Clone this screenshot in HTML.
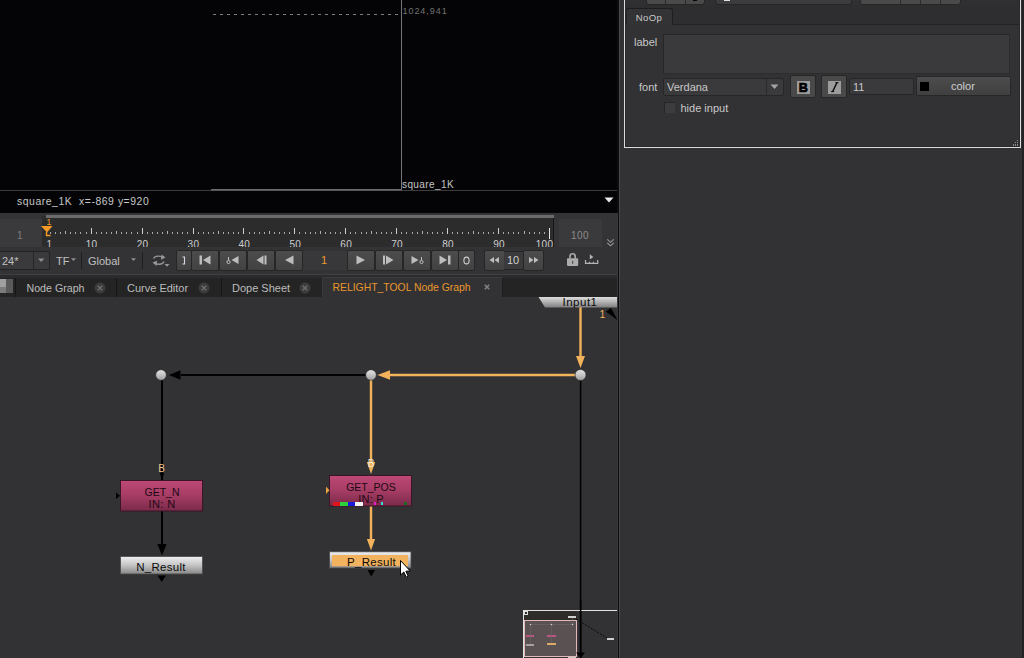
<!DOCTYPE html>
<html>
<head>
<meta charset="utf-8">
<title>Nuke</title>
<style>
html,body{margin:0;padding:0;}
body{width:1024px;height:658px;overflow:hidden;background:#323234;font-family:"Liberation Sans",sans-serif;font-size:11px;color:#c8c8c8;position:relative;}
#root{position:absolute;left:0;top:0;width:1024px;height:658px;overflow:hidden;background:#323234;}
.abs{position:absolute;}
.t{position:absolute;white-space:nowrap;line-height:1;}
/* viewer */
#viewer{left:0;top:0;width:617px;height:213px;background:#040406;}
/* timeline */
#tl{left:0;top:213px;width:617px;height:34px;background:#343436;overflow:hidden;}
#ctl{left:0;top:247px;width:617px;height:27px;background:#333335;}
.btn{position:absolute;top:250px;height:21px;background:linear-gradient(#4c4c4c,#424242);border:1px solid #262626;border-radius:2px;box-sizing:border-box;}
/* tabs */
#tabs{left:0;top:275px;width:617px;height:22px;background:#242424;}
/* graph */
#graph{left:0;top:297px;width:617px;height:361px;background:#323234;overflow:hidden;}
/* panel */
#panel{left:624px;top:0;width:397px;height:148px;background:#323234;box-sizing:border-box;}
</style>
</head>
<body>
<div id="root">

<!-- VIEWER -->
<div id="viewer" class="abs">
  <!-- dashed line -->
  <div class="abs" style="left:213px;top:14px;width:188px;height:1px;background:repeating-linear-gradient(90deg,#7c7c7c 0,#7c7c7c 3px,transparent 3px,transparent 7px);"></div>
  <!-- vertical format line -->
  <div class="abs" style="left:401px;top:0;width:1px;height:190px;background:#767676;"></div>
  <div class="t" style="left:402.5px;top:7.2px;font-size:9px;letter-spacing:0.95px;color:#727272;">1024,941</div>
  <!-- bottom format line -->
  <div class="abs" style="left:211px;top:189px;width:191px;height:1px;background:#6c6c6c;"></div>
  <div class="abs" style="left:0;top:190px;width:617px;height:1px;background:#3c3c3c;"></div>
  <div class="abs" style="left:211px;top:190px;width:191px;height:1px;background:#555;"></div>
  <div class="t" style="left:402px;top:180px;font-size:10px;letter-spacing:0.4px;color:#c4c4c4;">square_1K</div>
  <!-- status -->
  <div class="t" style="left:17px;top:197px;font-size:10.4px;letter-spacing:0.55px;color:#c8c8c8;">square_1K&nbsp; x=-869 y=920</div>
  <svg class="abs" style="left:604px;top:197px;" width="10" height="6" viewBox="0 0 10 6"><path d="M0.5 0.5 L9.5 0.5 L5 5.5 Z" fill="#e8e8e8"/></svg>
</div>

<!-- TIMELINE -->
<div id="tl" class="abs">
  <div class="abs" style="left:0;top:0;width:619px;height:35px;background:#343436;"></div>
  <div class="abs" style="left:0;top:6px;width:42px;height:28px;background:#3a3a3c;"></div>
  <div class="abs" style="left:42px;top:3px;width:512px;height:31px;background:#2c2c2d;"></div>
  <div class="abs" style="left:553px;top:5px;width:1px;height:29px;background:#161616;"></div>
  <div class="abs" style="left:559px;top:6px;width:43px;height:28px;background:#3a3a3c;"></div>
  <div class="abs" style="left:46px;top:2px;width:508px;height:3px;background:#6b6b6b;"></div>
  <svg class="abs" style="left:0;top:0;" width="619" height="34" viewBox="0 0 619 34">
    <g shape-rendering="crispEdges"><rect x="50" y="19" width="1" height="2" fill="#a8a8a8"/><rect x="55" y="19" width="1" height="2" fill="#a8a8a8"/><rect x="60" y="19" width="1" height="2" fill="#a8a8a8"/><rect x="65" y="18" width="1" height="3" fill="#b0b0b0"/><rect x="70" y="19" width="1" height="2" fill="#a8a8a8"/><rect x="75" y="19" width="1" height="2" fill="#a8a8a8"/><rect x="80" y="19" width="1" height="2" fill="#a8a8a8"/><rect x="86" y="19" width="1" height="2" fill="#a8a8a8"/><rect x="91" y="15" width="1" height="6" fill="#d0d0d0"/><rect x="96" y="19" width="1" height="2" fill="#a8a8a8"/><rect x="101" y="19" width="1" height="2" fill="#a8a8a8"/><rect x="106" y="19" width="1" height="2" fill="#a8a8a8"/><rect x="111" y="19" width="1" height="2" fill="#a8a8a8"/><rect x="116" y="18" width="1" height="3" fill="#b0b0b0"/><rect x="121" y="19" width="1" height="2" fill="#a8a8a8"/><rect x="126" y="19" width="1" height="2" fill="#a8a8a8"/><rect x="131" y="19" width="1" height="2" fill="#a8a8a8"/><rect x="137" y="19" width="1" height="2" fill="#a8a8a8"/><rect x="142" y="15" width="1" height="6" fill="#d0d0d0"/><rect x="147" y="19" width="1" height="2" fill="#a8a8a8"/><rect x="152" y="19" width="1" height="2" fill="#a8a8a8"/><rect x="157" y="19" width="1" height="2" fill="#a8a8a8"/><rect x="162" y="19" width="1" height="2" fill="#a8a8a8"/><rect x="167" y="18" width="1" height="3" fill="#b0b0b0"/><rect x="172" y="19" width="1" height="2" fill="#a8a8a8"/><rect x="177" y="19" width="1" height="2" fill="#a8a8a8"/><rect x="182" y="19" width="1" height="2" fill="#a8a8a8"/><rect x="187" y="19" width="1" height="2" fill="#a8a8a8"/><rect x="193" y="15" width="1" height="6" fill="#d0d0d0"/><rect x="198" y="19" width="1" height="2" fill="#a8a8a8"/><rect x="203" y="19" width="1" height="2" fill="#a8a8a8"/><rect x="208" y="19" width="1" height="2" fill="#a8a8a8"/><rect x="213" y="19" width="1" height="2" fill="#a8a8a8"/><rect x="218" y="18" width="1" height="3" fill="#b0b0b0"/><rect x="223" y="19" width="1" height="2" fill="#a8a8a8"/><rect x="228" y="19" width="1" height="2" fill="#a8a8a8"/><rect x="233" y="19" width="1" height="2" fill="#a8a8a8"/><rect x="238" y="19" width="1" height="2" fill="#a8a8a8"/><rect x="243" y="15" width="1" height="6" fill="#d0d0d0"/><rect x="249" y="19" width="1" height="2" fill="#a8a8a8"/><rect x="254" y="19" width="1" height="2" fill="#a8a8a8"/><rect x="259" y="19" width="1" height="2" fill="#a8a8a8"/><rect x="264" y="19" width="1" height="2" fill="#a8a8a8"/><rect x="269" y="18" width="1" height="3" fill="#b0b0b0"/><rect x="274" y="19" width="1" height="2" fill="#a8a8a8"/><rect x="279" y="19" width="1" height="2" fill="#a8a8a8"/><rect x="284" y="19" width="1" height="2" fill="#a8a8a8"/><rect x="289" y="19" width="1" height="2" fill="#a8a8a8"/><rect x="294" y="15" width="1" height="6" fill="#d0d0d0"/><rect x="299" y="19" width="1" height="2" fill="#a8a8a8"/><rect x="305" y="19" width="1" height="2" fill="#a8a8a8"/><rect x="310" y="19" width="1" height="2" fill="#a8a8a8"/><rect x="315" y="19" width="1" height="2" fill="#a8a8a8"/><rect x="320" y="18" width="1" height="3" fill="#b0b0b0"/><rect x="325" y="19" width="1" height="2" fill="#a8a8a8"/><rect x="330" y="19" width="1" height="2" fill="#a8a8a8"/><rect x="335" y="19" width="1" height="2" fill="#a8a8a8"/><rect x="340" y="19" width="1" height="2" fill="#a8a8a8"/><rect x="345" y="15" width="1" height="6" fill="#d0d0d0"/><rect x="350" y="19" width="1" height="2" fill="#a8a8a8"/><rect x="355" y="19" width="1" height="2" fill="#a8a8a8"/><rect x="361" y="19" width="1" height="2" fill="#a8a8a8"/><rect x="366" y="19" width="1" height="2" fill="#a8a8a8"/><rect x="371" y="18" width="1" height="3" fill="#b0b0b0"/><rect x="376" y="19" width="1" height="2" fill="#a8a8a8"/><rect x="381" y="19" width="1" height="2" fill="#a8a8a8"/><rect x="386" y="19" width="1" height="2" fill="#a8a8a8"/><rect x="391" y="19" width="1" height="2" fill="#a8a8a8"/><rect x="396" y="15" width="1" height="6" fill="#d0d0d0"/><rect x="401" y="19" width="1" height="2" fill="#a8a8a8"/><rect x="406" y="19" width="1" height="2" fill="#a8a8a8"/><rect x="412" y="19" width="1" height="2" fill="#a8a8a8"/><rect x="417" y="19" width="1" height="2" fill="#a8a8a8"/><rect x="422" y="18" width="1" height="3" fill="#b0b0b0"/><rect x="427" y="19" width="1" height="2" fill="#a8a8a8"/><rect x="432" y="19" width="1" height="2" fill="#a8a8a8"/><rect x="437" y="19" width="1" height="2" fill="#a8a8a8"/><rect x="442" y="19" width="1" height="2" fill="#a8a8a8"/><rect x="447" y="15" width="1" height="6" fill="#d0d0d0"/><rect x="452" y="19" width="1" height="2" fill="#a8a8a8"/><rect x="457" y="19" width="1" height="2" fill="#a8a8a8"/><rect x="462" y="19" width="1" height="2" fill="#a8a8a8"/><rect x="468" y="19" width="1" height="2" fill="#a8a8a8"/><rect x="473" y="18" width="1" height="3" fill="#b0b0b0"/><rect x="478" y="19" width="1" height="2" fill="#a8a8a8"/><rect x="483" y="19" width="1" height="2" fill="#a8a8a8"/><rect x="488" y="19" width="1" height="2" fill="#a8a8a8"/><rect x="493" y="19" width="1" height="2" fill="#a8a8a8"/><rect x="498" y="15" width="1" height="6" fill="#d0d0d0"/><rect x="503" y="19" width="1" height="2" fill="#a8a8a8"/><rect x="508" y="19" width="1" height="2" fill="#a8a8a8"/><rect x="513" y="19" width="1" height="2" fill="#a8a8a8"/><rect x="518" y="19" width="1" height="2" fill="#a8a8a8"/><rect x="524" y="18" width="1" height="3" fill="#b0b0b0"/><rect x="529" y="19" width="1" height="2" fill="#a8a8a8"/><rect x="534" y="19" width="1" height="2" fill="#a8a8a8"/><rect x="539" y="19" width="1" height="2" fill="#a8a8a8"/><rect x="544" y="19" width="1" height="2" fill="#a8a8a8"/><rect x="549" y="15" width="1" height="11" fill="#e6e6e6"/></g>
    <g font-family="Liberation Sans, sans-serif" font-size="10" fill="#cfcfcf" letter-spacing="0.3"><text x="46.5" y="35" text-anchor="start">1</text><text x="91.6" y="35" text-anchor="middle">10</text><text x="142.5" y="35" text-anchor="middle">20</text><text x="193.4" y="35" text-anchor="middle">30</text><text x="244.3" y="35" text-anchor="middle">40</text><text x="295.3" y="35" text-anchor="middle">50</text><text x="346.2" y="35" text-anchor="middle">60</text><text x="397.1" y="35" text-anchor="middle">70</text><text x="448.0" y="35" text-anchor="middle">80</text><text x="499.0" y="35" text-anchor="middle">90</text><text x="553.3" y="35" text-anchor="end">100</text></g>
    <text x="17" y="25.5" font-family="Liberation Sans, sans-serif" font-size="10" fill="#808080">1</text>
    <text x="571" y="25.5" font-family="Liberation Sans, sans-serif" font-size="10" letter-spacing="0.4" fill="#8a8a8a">100</text>
    <!-- playhead -->
    <text x="46.5" y="12" font-family="Liberation Sans, sans-serif" font-size="8.5" fill="#f09a28">1</text>
    <path d="M41 13 L52.5 13 L47 19.5 Z" fill="#f59a26"/>
    <path d="M46.5 19 L46.5 22.5 L50.5 22.5" stroke="#f59a26" stroke-width="1.4" fill="none"/>
    <!-- chevrons -->
    <path d="M607.3 26.3 L610.5 29.3 L613.7 26.3 M607.3 29.8 L610.5 32.8 L613.7 29.8" stroke="#9a9a9a" stroke-width="1.1" fill="none"/>
  </svg>
</div>
<div id="ctl" class="abs"></div>
<div class="abs" style="left:0;top:274px;width:617px;height:1px;background:#404042;"></div>
<div class="abs" style="left:-2px;top:251px;width:52px;height:19px;background:#3a3a3c;border:1px solid #222224;border-radius:2px;box-sizing:border-box;"></div>
<div class="abs" style="left:33px;top:252px;width:1px;height:17px;background:#262628;"></div>
<div class="t" style="left:2px;top:255.7px;font-size:11px;color:#c0c0c0;">24*</div>
<svg class="abs" style="left:38px;top:258px;" width="8" height="5"><path d="M0 0.5 L6.4 0.5 L3.2 4 Z" fill="#8e8e8e"/></svg>
<div class="t" style="left:56px;top:255.7px;font-size:11px;color:#c0c0c0;">TF</div>
<svg class="abs" style="left:71px;top:258px;" width="7" height="4"><path d="M0 0.3 L5 0.3 L2.5 3 Z" fill="#8e8e8e"/></svg>
<div class="abs" style="left:81px;top:252px;width:1px;height:17px;background:#1e1e20;"></div>
<div class="t" style="left:88px;top:255.7px;font-size:11px;color:#c0c0c0;">Global</div>
<svg class="abs" style="left:131px;top:258px;" width="7" height="4"><path d="M0 0.3 L5 0.3 L2.5 3 Z" fill="#8e8e8e"/></svg>
<div class="abs" style="left:142px;top:252px;width:1px;height:17px;background:#1e1e20;"></div>
<svg class="abs" style="left:151px;top:253px;" width="20" height="15" viewBox="0 0 20 15"><path d="M2.5 5.5 C4 2.5 10 2.5 12 4.5" stroke="#989898" stroke-width="1.4" fill="none"/><path d="M10.5 1.5 L14.5 4.5 L10 6.8 Z" fill="#989898"/><path d="M13 8.5 C11.5 12 5.5 12 3.5 9.5" stroke="#989898" stroke-width="1.4" fill="none"/><path d="M5.5 13 L1.5 9.5 L6 7.7 Z" fill="#989898"/><path d="M13.5 11 L18.5 11 L16 13.8 Z" fill="#989898"/></svg>
<div class="btn" style="left:176px;width:16px;"><svg class="abs" style="left:1px;top:1px;" width="12" height="17" viewBox="0 0 12 17"><path d="M4.5 5 L6.5 5 L6.5 12 L4.5 12" stroke="#d8d8e8" stroke-width="1.1" fill="none"/></svg></div>
<div class="btn" style="left:191px;width:28px;"><svg class="abs" style="left:1px;top:1px;" width="24" height="17" viewBox="0 0 24 17"><rect x="6.5" y="3.5" width="2.5" height="9" fill="#bdbdbd"/><path d="M10 8 L17.5 3.5 L17.5 12.5 Z" fill="#bdbdbd"/></svg></div>
<div class="btn" style="left:219px;width:28px;"><svg class="abs" style="left:1px;top:1px;" width="24" height="17" viewBox="0 0 24 17"><circle cx="7.5" cy="10" r="1.6" stroke="#bdbdbd" stroke-width="1" fill="none"/><path d="M7.5 8.5 L7.5 5" stroke="#bdbdbd" stroke-width="1"/><path d="M10.5 8 L17.5 4 L17.5 12 Z" fill="#bdbdbd"/></svg></div>
<div class="btn" style="left:247px;width:28px;"><svg class="abs" style="left:1px;top:1px;" width="24" height="17" viewBox="0 0 24 17"><path d="M7.5 8 L14.5 3.5 L14.5 12.5 Z" fill="#bdbdbd"/><rect x="15.5" y="3.5" width="2" height="9" fill="#bdbdbd"/></svg></div>
<div class="btn" style="left:275px;width:28px;"><svg class="abs" style="left:1px;top:1px;" width="24" height="17" viewBox="0 0 24 17"><path d="M8 8 L16.5 3.5 L16.5 12.5 Z" fill="#bdbdbd"/></svg></div>
<div class="abs" style="left:303px;top:251px;width:44px;height:19px;background:#38383a;"></div>
<div class="t" style="left:321px;top:255px;font-size:11px;color:#f09a2c;">1</div>
<div class="btn" style="left:347px;width:28px;"><svg class="abs" style="left:1px;top:1px;" width="24" height="17" viewBox="0 0 24 17"><path d="M16 8 L7.5 3.5 L7.5 12.5 Z" fill="#bdbdbd"/></svg></div>
<div class="btn" style="left:375px;width:28px;"><svg class="abs" style="left:1px;top:1px;" width="24" height="17" viewBox="0 0 24 17"><rect x="6" y="3.5" width="2" height="9" fill="#bdbdbd"/><path d="M16.5 8 L9 3.5 L9 12.5 Z" fill="#bdbdbd"/></svg></div>
<div class="btn" style="left:403px;width:28px;"><svg class="abs" style="left:1px;top:1px;" width="24" height="17" viewBox="0 0 24 17"><path d="M13.5 8 L6.5 4 L6.5 12 Z" fill="#bdbdbd"/><circle cx="16.5" cy="10" r="1.6" stroke="#bdbdbd" stroke-width="1" fill="none"/><path d="M16.5 8.5 L16.5 5" stroke="#bdbdbd" stroke-width="1"/></svg></div>
<div class="btn" style="left:431px;width:28px;"><svg class="abs" style="left:1px;top:1px;" width="24" height="17" viewBox="0 0 24 17"><path d="M14 8 L6.5 3.5 L6.5 12.5 Z" fill="#bdbdbd"/><rect x="15" y="3.5" width="2.5" height="9" fill="#bdbdbd"/></svg></div>
<div class="btn" style="left:458px;width:17px;"><svg class="abs" style="left:1px;top:1px;" width="13" height="17" viewBox="0 0 13 17"><ellipse cx="6.5" cy="8.5" rx="2.6" ry="3.4" stroke="#d0d0d0" stroke-width="1.1" fill="none"/></svg></div>
<div class="btn" style="left:484px;width:21px;"><svg class="abs" style="left:1px;top:1px;" width="17" height="17" viewBox="0 0 17 17"><path d="M3.5 8 L8 5 L8 11 Z M8.5 8 L13 5 L13 11 Z" fill="#bdbdbd"/></svg></div>
<div class="abs" style="left:504px;top:251px;width:20px;height:19px;background:#3a3a3c;border-top:1px solid #262628;border-bottom:1px solid #262628;box-sizing:border-box;"></div>
<div class="t" style="left:507px;top:255px;font-size:11px;color:#d0d0d0;">10</div>
<div class="btn" style="left:523px;width:21px;"><svg class="abs" style="left:1px;top:1px;" width="17" height="17" viewBox="0 0 17 17"><path d="M8.5 8 L4 5 L4 11 Z M13.5 8 L9 5 L9 11 Z" fill="#bdbdbd"/></svg></div>
<svg class="abs" style="left:566px;top:252px;" width="13" height="15" viewBox="0 0 13 15"><path d="M4 6.5 L4 4.4 A2.6 2.6 0 0 1 9.2 4.4 L9.2 6.5" stroke="#acacac" stroke-width="1.6" fill="none"/><rect x="1" y="6.3" width="11.2" height="7.6" rx="0.8" fill="#acacac"/><rect x="6" y="8.8" width="1.2" height="3" fill="#555"/></svg>
<svg class="abs" style="left:584px;top:252px;" width="15" height="14" viewBox="0 0 15 14"><path d="M1.5 8 L1.5 11.3 L13.7 11.3 L13.7 8 M5.5 9.8 L5.5 11.3 M9.5 9.8 L9.5 11.3" stroke="#b4b4b4" stroke-width="1.2" fill="none"/><path d="M5.8 2.2 L9.4 4.9 L5.8 7.6 Z" fill="#b4b4b4"/></svg>

<!-- TABS -->
<div id="tabs" class="abs"></div>
<div class="abs" style="left:0;top:275px;width:617px;height:3px;background:#2b2b2d;"></div>
<!-- pane icon -->
<div class="abs" style="left:0;top:279px;width:6px;height:8px;background:#a0a0a0;"></div>
<div class="abs" style="left:0;top:287px;width:6px;height:6px;background:#7c7c7c;"></div>
<div class="abs" style="left:6px;top:279px;width:7px;height:14px;background:#5a5a5a;"></div>
<!-- tab dividers -->
<div class="abs" style="left:15px;top:278px;width:1px;height:19px;background:#161616;"></div>
<div class="abs" style="left:116px;top:278px;width:1px;height:19px;background:#161616;"></div>
<div class="abs" style="left:221px;top:278px;width:1px;height:19px;background:#161616;"></div>
<div class="t" style="left:26.5px;top:283px;font-size:10.65px;color:#bcbcbc;">Node Graph</div>
<svg class="abs" style="left:94px;top:281.5px;" width="12" height="12" viewBox="0 0 12 12"><circle cx="6" cy="6" r="5.5" fill="#3c3c3e"/><path d="M3.8 3.8 L8.2 8.2 M8.2 3.8 L3.8 8.2" stroke="#6a6a6a" stroke-width="1.6"/></svg>
<div class="t" style="left:127px;top:283px;font-size:11px;color:#bcbcbc;">Curve Editor</div>
<svg class="abs" style="left:198px;top:281.5px;" width="12" height="12" viewBox="0 0 12 12"><circle cx="6" cy="6" r="5.5" fill="#3c3c3e"/><path d="M3.8 3.8 L8.2 8.2 M8.2 3.8 L3.8 8.2" stroke="#6a6a6a" stroke-width="1.6"/></svg>
<div class="t" style="left:232px;top:283px;font-size:11px;color:#bcbcbc;">Dope Sheet</div>
<svg class="abs" style="left:299px;top:281.5px;" width="12" height="12" viewBox="0 0 12 12"><circle cx="6" cy="6" r="5.5" fill="#3c3c3e"/><path d="M3.8 3.8 L8.2 8.2 M8.2 3.8 L3.8 8.2" stroke="#6a6a6a" stroke-width="1.6"/></svg>
<!-- active tab -->
<div class="abs" style="left:322px;top:277px;width:181px;height:20px;background:#323234;border-top:1px solid #3c3c3e;border-left:1px solid #3a3a3c;border-right:1px solid #1e1e20;box-sizing:border-box;"></div>
<div class="t" style="left:332.5px;top:283px;font-size:10.4px;color:#e8962e;">RELIGHT_TOOL Node Graph</div>
<svg class="abs" style="left:480.5px;top:281px;" width="12" height="12" viewBox="0 0 12 12"><circle cx="6" cy="6" r="5.5" fill="#323234"/><path d="M3.8 3.8 L8.2 8.2 M8.2 3.8 L3.8 8.2" stroke="#808080" stroke-width="1.6"/></svg>


<!-- GRAPH -->
<div id="graph" class="abs">
<svg class="abs" style="left:0;top:0;" width="618" height="361" viewBox="0 297 618 361">
  <defs>
    <linearGradient id="gInput" x1="0" y1="0" x2="0" y2="1"><stop offset="0" stop-color="#dcdcdc"/><stop offset="0.45" stop-color="#b4b4b4"/><stop offset="1" stop-color="#7e7e7e"/></linearGradient>
    <linearGradient id="gPink" x1="0" y1="0" x2="0" y2="1"><stop offset="0" stop-color="#be4976"/><stop offset="0.5" stop-color="#a53c64"/><stop offset="1" stop-color="#7a2a4a"/></linearGradient>
    <linearGradient id="gGrey" x1="0" y1="0" x2="0" y2="1"><stop offset="0" stop-color="#f0f0f0"/><stop offset="0.5" stop-color="#c4c4c4"/><stop offset="1" stop-color="#868686"/></linearGradient>
    <linearGradient id="gDot" x1="0" y1="0" x2="0" y2="1"><stop offset="0" stop-color="#e4e4e4"/><stop offset="0.5" stop-color="#c4c4c4"/><stop offset="1" stop-color="#9a9a9a"/></linearGradient>
  </defs>
  <!-- black edges -->
  <g stroke="#000" stroke-width="2" fill="none">
    <path d="M181 375 L366 375"/>
    <path d="M162 380 L162 481"/>
    <path d="M162 511 L162 545"/>
    <path d="M580.6 380 L580.6 658" stroke-width="1.5"/>
  </g>
  <!-- black arrowheads -->
  <path d="M169 375 L180.5 370.2 L180.5 379.8 Z" fill="#000"/>
  <path d="M162 555.5 L157.4 544 L166.6 544 Z" fill="#000"/>
  <path d="M162 480.5 L159.8 473 L164.2 473 Z" fill="#000"/>
  <!-- orange edges -->
  <g stroke="#f2b25c" stroke-width="2.4" fill="none">
    <path d="M580.5 307 L580.5 357"/>
    <path d="M389 375 L575 375"/>
    <path d="M371 380 L371 463"/>
    <path d="M371 506 L371 540"/>
  </g>
  <path d="M580.5 368 L576 356 L585 356 Z" fill="#f2b25c"/>
  <path d="M377.5 375 L390 370.2 L390 379.8 Z" fill="#f2b25c"/>
  <path d="M371 474 L366.8 462 L375.2 462 Z" fill="#f2b25c"/>
  <path d="M371 550.5 L366.9 539 L375.1 539 Z" fill="#f2b25c"/>
  <!-- dots -->
  <circle cx="161" cy="375" r="5.3" fill="url(#gDot)" stroke="#2a2a2a" stroke-width="0.6"/>
  <circle cx="371" cy="375" r="5.3" fill="url(#gDot)" stroke="#2a2a2a" stroke-width="0.6"/>
  <circle cx="580.5" cy="375" r="5.5" fill="url(#gDot)" stroke="#2a2a2a" stroke-width="0.6"/>
  <!-- Input1 -->
  <path d="M538.5 297 L618 297 L618 307.5 L545 307.5 Z" fill="url(#gInput)"/>
  <text x="562.5" y="306" font-family="Liberation Sans, sans-serif" font-size="11.5" letter-spacing="0.5" fill="#0a0a0a">Input1</text>
  <text x="599.5" y="318" font-family="Liberation Sans, sans-serif" font-size="10.5" fill="#f0b060">1</text>
  <path d="M605.8 311.5 L611 308 L617.5 320 Z" fill="#000"/>
  <!-- GET_N -->
  <rect x="120.5" y="480.5" width="82" height="30.5" fill="url(#gPink)" stroke="#3c1426" stroke-width="1"/>
  <g font-family="Liberation Sans, sans-serif" font-size="11" fill="#200812" text-anchor="middle" letter-spacing="0.3">
    <text x="162" y="496" font-size="10.5" letter-spacing="0">GET_N</text><text x="162" y="508" letter-spacing="0.4">IN: N</text>
  </g>
  <path d="M116 492.5 L120 495.7 L116 499 Z" fill="#000"/>
  <text x="161.5" y="472" text-anchor="middle" font-family="Liberation Sans, sans-serif" font-size="10" fill="#f0c488">B</text>
  <!-- N_Result -->
  <rect x="120.5" y="556.5" width="82" height="17.5" fill="url(#gGrey)" stroke="#4a4a4a" stroke-width="0.8"/>
  <text x="161" y="571" text-anchor="middle" font-family="Liberation Sans, sans-serif" font-size="11.5" letter-spacing="0.3" fill="#0a0a0a">N_Result</text>
  <path d="M157.5 575.5 L166 575.5 L161.7 582 Z" fill="#000"/>
  <!-- GET_POS -->
  <rect x="329.5" y="475.5" width="82" height="30.5" fill="url(#gPink)" stroke="#3c1426" stroke-width="1"/>
  <g font-family="Liberation Sans, sans-serif" font-size="11" fill="#200812" text-anchor="middle" letter-spacing="0.3">
    <text x="371" y="491" font-size="10.5" letter-spacing="0">GET_POS</text><text x="371" y="503" letter-spacing="0.25">IN: P</text>
  </g>
  <g shape-rendering="crispEdges">
    <rect x="333" y="502" width="7" height="3.5" fill="#e0141c"/>
    <rect x="340" y="502" width="8" height="3.5" fill="#2ad23c"/>
    <rect x="348" y="502" width="7" height="3.5" fill="#1a1ad8"/>
    <rect x="355" y="502" width="8" height="3.5" fill="#f4f4f4"/>
    <rect x="374" y="502" width="2" height="3" fill="#e020d0"/>
    <rect x="381" y="502" width="2" height="3" fill="#30e0e0"/>
    <rect x="404" y="502" width="3" height="3" fill="#186a20"/>
  </g>
  <path d="M326 486.5 L329.5 490.2 L326 494 Z" fill="#e8a040"/>
  <text x="371" y="467" text-anchor="middle" font-family="Liberation Sans, sans-serif" font-size="10" fill="#f4ead8">B</text>
  <!-- P_Result -->
  <rect x="329.5" y="551.8" width="81.5" height="16.2" fill="url(#gGrey)" stroke="#4a4a4a" stroke-width="0.8"/>
  <rect x="332" y="555" width="76" height="11.2" fill="#f2b25e"/>
  <text x="371.5" y="566" text-anchor="middle" font-family="Liberation Sans, sans-serif" font-size="11.5" letter-spacing="0.3" fill="#0a0a0a">P_Result</text>
  <path d="M367.5 570 L375 570 L371.2 576.5 Z" fill="#000"/>
  <!-- minimap -->
  <g shape-rendering="crispEdges">
    <rect x="524" y="611" width="53" height="9" fill="#2e2c28"/>
    <rect x="523" y="610" width="94" height="1" fill="#e2e2e2"/>
    <rect x="523" y="610" width="1" height="48" fill="#e2e2e2"/>
    <rect x="524.5" y="611.5" width="3" height="3" fill="none" stroke="#dcdcdc" stroke-width="1"/>
    <rect x="524.5" y="620.5" width="52" height="36" fill="#5a5252" stroke="#e4b8b8" stroke-width="1"/>
    <rect x="568" y="616" width="8" height="2" fill="#cfcfcf"/>
    <rect x="607" y="638" width="7" height="2" fill="#cfcfcf"/>
    <rect x="568" y="657" width="8" height="1" fill="#c8c8c8"/>
    <rect x="526" y="635" width="8" height="2" fill="#bc5680"/>
    <rect x="547" y="635" width="9" height="2" fill="#bc5680"/>
    <rect x="526" y="644" width="8" height="1.5" fill="#a8a0a0"/>
    <rect x="547" y="643" width="9" height="2" fill="#dcaa68"/>
  </g>
  <path d="M530.5 624.5 L572.5 624.5" stroke="#746c6c" stroke-width="0.5"/>
  <path d="M530.5 625 L530.5 644 M551.5 625 L551.5 643 M572.5 618 L572.5 624" stroke="#6c6464" stroke-width="0.6"/>
  <circle cx="530.5" cy="624.5" r="0.75" fill="#d8d8d8"/><circle cx="551.5" cy="624.5" r="0.75" fill="#d8d8d8"/><circle cx="572.5" cy="624.5" r="0.75" fill="#d8d8d8"/>
  <path d="M576 619 L607 638" stroke="#0a0a0a" stroke-width="1" stroke-dasharray="2 1.5"/>
  <path d="M580.8 658 L576 652.5 L585 652.5 Z" fill="#000"/>
  <path d="M580.6 600 L580.6 656" stroke="#000" stroke-width="1.5"/>
  <!-- cursor -->
  <path d="M400.5 560.5 L400.5 575 L403.8 572 L406.2 577.2 L408.2 576.3 L405.9 571.2 L410.2 571 Z" fill="#fff" stroke="#000" stroke-width="1"/>
</svg>
</div>

<!-- DIVIDER -->
<div class="abs" id="divider" style="left:617px;top:0;width:3px;height:658px;">
  <div class="abs" style="left:0;top:0;width:1px;height:213px;background:#0c0c0e;"></div>
  <div class="abs" style="left:0;top:213px;width:1px;height:445px;background:#38383a;"></div>
  <div class="abs" style="left:1px;top:0;width:1px;height:658px;background:#0c0c0c;"></div>
  <div class="abs" style="left:2px;top:0;width:1px;height:658px;background:#48484a;"></div>
</div>

<!-- PANEL -->
<div id="panel" class="abs">
  <!-- top toolbar remnants -->
  <div class="abs" style="left:0;top:0;width:397px;height:24px;background:#2e2e30;"></div>
  <div class="abs" style="left:0;top:0;width:397px;height:5px;background:#303032;"></div>
  <div class="abs" style="left:22px;top:-3px;width:59px;height:8px;background:#4a4a4a;border:1px solid #262626;border-radius:3px;box-sizing:border-box;"></div>
  <div class="abs" style="left:41px;top:0;width:1px;height:4px;background:#2a2a2a;"></div>
  <div class="abs" style="left:61px;top:0;width:1px;height:4px;background:#2a2a2a;"></div>
  <div class="abs" style="left:69px;top:0;width:4px;height:1px;background:#050505;"></div>
  <div class="abs" style="left:91px;top:-3px;width:137px;height:8px;background:#3c3c3e;border:1px solid #242424;border-radius:3px;box-sizing:border-box;"></div>
  <div class="abs" style="left:100px;top:0;width:6px;height:1px;background:#e0e0e0;"></div>
  <div class="abs" style="left:236px;top:-3px;width:101px;height:8px;background:#4a4a4a;border:1px solid #262626;border-radius:3px;box-sizing:border-box;"></div>
  <div class="abs" style="left:276px;top:0;width:1px;height:4px;background:#2a2a2a;"></div>
  <div class="abs" style="left:296px;top:0;width:1px;height:4px;background:#2a2a2a;"></div>
  <div class="abs" style="left:316px;top:0;width:1px;height:4px;background:#2a2a2a;"></div>
  <!-- tab -->
  <div class="abs" style="left:48px;top:24px;width:349px;height:1px;background:#222224;"></div>
  <div class="abs" style="left:2px;top:8px;width:47px;height:17px;background:#333335;border-top:1px solid #1e1e20;border-right:1px solid #1e1e20;border-left:1px solid #242426;border-radius:3px 3px 0 0;box-sizing:border-box;"></div>
  <div class="t" style="left:11.7px;top:12.8px;font-size:9.6px;letter-spacing:0.35px;color:#c8c8c8;">NoOp</div>
  <!-- label -->
  <div class="t" style="left:10px;top:37px;font-size:11px;color:#c8c8c8;">label</div>
  <div class="abs" style="left:39px;top:34px;width:347px;height:40px;background:#3a3a3c;border:1px solid #262628;border-bottom-color:#2c2c2e;border-right-color:#2c2c2e;box-sizing:border-box;"></div>
  <!-- font row -->
  <div class="t" style="left:15px;top:82px;font-size:11px;color:#c8c8c8;">font</div>
  <div class="abs" style="left:39px;top:78px;width:121px;height:18px;background:#3a3a3c;border:1px solid #262628;border-radius:2px;box-sizing:border-box;"></div>
  <div class="abs" style="left:142px;top:79px;width:1px;height:16px;background:#2a2a2c;"></div>
  <div class="t" style="left:43px;top:82px;font-size:11px;color:#c8c8c8;">Verdana</div>
  <svg class="abs" style="left:146px;top:84px;" width="9" height="6"><path d="M0.5 0.5 L8.5 0.5 L4.5 5 Z" fill="#a4a4a4"/></svg>
  <!-- B -->
  <div class="abs" style="left:166px;top:75px;width:26px;height:23px;background:#494949;border:1px solid #262626;border-radius:2px;box-sizing:border-box;"></div>
  <div class="abs" style="left:173px;top:81px;width:13px;height:13px;background:#9c9c9c;"></div>
  <svg class="abs" style="left:173px;top:81px;" width="13" height="13" viewBox="0 0 13 13"><text x="6.4" y="10.9" text-anchor="middle" font-family="Liberation Sans, sans-serif" font-weight="bold" font-size="12.6" fill="#000" stroke="#000" stroke-width="0.7">B</text></svg>
  <!-- I -->
  <div class="abs" style="left:197px;top:75px;width:26px;height:23px;background:#494949;border:1px solid #262626;border-radius:2px;box-sizing:border-box;"></div>
  <div class="abs" style="left:204px;top:81px;width:13px;height:13px;background:#9c9c9c;"></div>
  <svg class="abs" style="left:204px;top:81px;" width="13" height="13" viewBox="0 0 13 13"><path d="M4.6 10.6 L8.9 1.7" stroke="#000" stroke-width="1.3"/><path d="M3 10.6 L6.2 10.6 M7.3 1.7 L10.6 1.7" stroke="#000" stroke-width="0.9"/></svg>
  <!-- size -->
  <div class="abs" style="left:225px;top:78px;width:65px;height:17px;background:#3a3a3c;border:1px solid #262628;border-radius:2px;box-sizing:border-box;"></div>
  <div class="t" style="left:229px;top:82px;font-size:11px;color:#c8c8c8;">11</div>
  <!-- color -->
  <div class="abs" style="left:292px;top:76px;width:95px;height:20px;background:linear-gradient(#4c4c4c,#404040);border:1px solid #262626;border-radius:2px;box-sizing:border-box;"></div>
  <div class="abs" style="left:296px;top:82px;width:9px;height:9px;background:#000;"></div>
  <div class="t" style="left:327px;top:81px;font-size:11px;color:#d0d0d0;">color</div>
  <!-- checkbox -->
  <div class="abs" style="left:40px;top:102px;width:11px;height:11px;background:#3c3c3e;border-top:1px solid #262628;border-left:1px solid #262628;box-sizing:border-box;"></div>
  <div class="t" style="left:56.5px;top:102.5px;font-size:11px;color:#c8c8c8;">hide input</div>
  <!-- borders -->
  <div class="abs" style="left:1px;top:9px;width:1px;height:138px;background:#29292b;"></div>
  <div class="abs" style="left:395px;top:0;width:1px;height:147px;background:#29292b;"></div>
  <div class="abs" style="left:1px;top:146px;width:395px;height:1px;background:#29292b;"></div>
  <div class="abs" style="left:0;top:0;width:1px;height:148px;background:#dcdcdc;"></div>
  <div class="abs" style="left:396px;top:0;width:1px;height:148px;background:#dcdcdc;"></div>
  <div class="abs" style="left:0;top:147px;width:397px;height:1px;background:#dcdcdc;"></div>
  <svg class="abs" style="left:387px;top:139px;" width="8" height="8"><g fill="#8a8a8a"><rect x="6" y="1" width="1" height="1"/><rect x="4" y="3" width="1" height="1"/><rect x="6" y="3" width="1" height="1"/><rect x="2" y="5" width="1" height="2"/><rect x="4" y="5" width="1" height="2"/><rect x="6" y="5" width="1" height="2"/></g></svg>
</div>
<div class="abs" style="left:1022px;top:0;width:2px;height:658px;background:#232325;"></div>

</div>
</body>
</html>
